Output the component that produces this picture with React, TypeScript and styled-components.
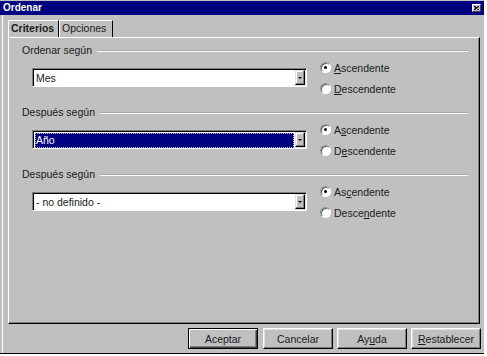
import React from "react";
import styled, { createGlobalStyle } from "styled-components";

const Global = createGlobalStyle`
  html, body { margin: 0; padding: 0; background: #ffffff; }
  body {
    font-family: "Liberation Sans", Arial, sans-serif;
    font-size: 10.5px;
    color: #1a1a1a;
  }
  #root { width: 487px; height: 356px; }
`;

const Window = styled.div`
  box-sizing: border-box;
  width: 484px;
  height: 354px;
  background: #c0c0c0;
  border-bottom: 1px solid #000;
  display: flex;
  flex-direction: column;
`;

const TitleBar = styled.div`
  height: 14px;
  margin-top: 1px;
  background: #000080;
  color: #fff;
  font-weight: bold;
  font-size: 10px;
  line-height: 14px;
  padding-left: 3px;
  display: flex;
  align-items: center;
  justify-content: space-between;
  padding-right: 3px;
`;

const CloseBox = styled.div`
  box-sizing: border-box;
  width: 9px;
  height: 8px;
  background: #c0c0c0;
  border: 1px solid;
  border-color: #fff #404040 #404040 #fff;
  display: flex;
  align-items: center;
  justify-content: center;
`;

const Body = styled.div`
  flex: 1;
  margin-left: 2px;
  border-left: 1px solid #fff;
  padding: 5px 3px 0 5px;
  display: flex;
  flex-direction: column;
`;

const TabStrip = styled.div`
  display: flex;
  height: 17px;
`;

const Tab = styled.div<{ $active?: boolean; $width: number }>`
  box-sizing: border-box;
  width: ${(p) => p.$width}px;
  height: 17px;
  border-left: 1px solid #fff;
  border-top: 1px solid #fff;
  border-right: 1px solid #000;
  padding-left: 2px;
  font-weight: ${(p) => (p.$active ? "bold" : "normal")};
  line-height: 15px;
  white-space: nowrap;
`;

const Panel = styled.div`
  box-sizing: border-box;
  width: 472px;
  height: 287px;
  border-top: 1px solid #fff;
  border-left: 1px solid #fff;
  border-right: 1px solid #000;
  border-bottom: 1px solid #000;
  box-shadow: inset -1px -1px 0 #808080;
  padding: 6px 11px 0 13px;
  display: flex;
  flex-direction: column;
  gap: 7px;
`;

const Group = styled.div`
  display: flex;
  flex-direction: column;
`;

const GroupHeader = styled.div`
  display: flex;
  align-items: center;
  height: 13px;
  line-height: 13px;
`;

const GroupLine = styled.div`
  flex: 1;
  margin-left: 5px;
  height: 0;
  border-top: 1px solid #a8a8a8;
  border-bottom: 1px solid #fff;
`;

const GroupBody = styled.div`
  display: flex;
  align-items: flex-start;
`;

const Combo = styled.div`
  box-sizing: border-box;
  margin: 11px 0 0 10px;
  width: 275px;
  height: 19px;
  border: 1px solid;
  border-color: #808080 #fff #fff #808080;
  box-shadow: inset 1px 1px 0 #000, inset -1px -1px 0 #dfdfdf;
  background: #fff;
  display: flex;
  padding: 1px;
`;

const ComboField = styled.div<{ $selected?: boolean }>`
  flex: 1;
  margin: 1px 1px 0 1px;
  padding-left: 1px;
  line-height: 15px;
  height: 15px;
  background: ${(p) => (p.$selected ? "#000080" : "#fff")};
  color: ${(p) => (p.$selected ? "#fff" : "#1a1a1a")};
  outline: ${(p) => (p.$selected ? "1px dotted #c0c0c0" : "none")};
  outline-offset: -1px;
`;

const DropButton = styled.div`
  box-sizing: border-box;
  width: 10px;
  height: 15px;
  background: #c0c0c0;
  border: 1px solid;
  border-color: #dfdfdf #000 #000 #dfdfdf;
  box-shadow: inset -1px -1px 0 #808080, inset 1px 1px 0 #fff;
  display: flex;
  align-items: center;
  justify-content: center;
`;

const Arrow = styled.div`
  width: 0;
  height: 0;
  border-left: 2px solid transparent;
  border-right: 2px solid transparent;
  border-top: 2px solid #000;
`;

const RadioCol = styled.div`
  margin-left: 13px;
  display: flex;
  flex-direction: column;
`;

const RadioRow = styled.label`
  display: flex;
  align-items: center;
  height: 21px;
  white-space: nowrap;
`;

const RadioCircle = styled.span<{ $checked?: boolean }>`
  box-sizing: border-box;
  width: 11px;
  height: 11px;
  border-radius: 50%;
  border: 1px solid;
  border-color: #909090 #fff #fff #909090;
  box-shadow: inset 1px 1px 0 #606060;
  background: #fff;
  margin-right: 3px;
  display: flex;
  align-items: center;
  justify-content: center;
  &::after {
    content: "";
    display: ${(p) => (p.$checked ? "block" : "none")};
    width: 3px;
    height: 3px;
    border-radius: 50%;
    background: #000;
  }
`;

const ButtonRow = styled.div`
  display: flex;
  justify-content: flex-end;
  gap: 4px;
  margin-top: 4px;
`;

const Button = styled.button<{ $default?: boolean }>`
  box-sizing: border-box;
  width: 70px;
  height: 21px;
  padding: 0;
  margin-right: ${(p) => (p.$default ? "1px" : "0")};
  font-family: "Liberation Sans", Arial, sans-serif;
  font-size: 10.5px;
  color: #1a1a1a;
  background: #c0c0c0;
  border: 1px solid;
  border-color: ${(p) => (p.$default ? "#000" : "#fff #000 #000 #fff")};
  box-shadow: ${(p) =>
    p.$default
      ? "inset 1px 1px 0 #fff, inset -1px -1px 0 #404040, inset -2px -2px 0 #808080"
      : "inset -1px -1px 0 #808080, inset 1px 1px 0 #dfdfdf"};
`;

type GroupData = {
  label: string;
  value: string;
  selected?: boolean;
  asc: React.ReactNode;
  desc: React.ReactNode;
};

const groups: GroupData[] = [
  {
    label: "Ordenar según",
    value: "Mes",
    asc: (
      <>
        <u>A</u>scendente
      </>
    ),
    desc: (
      <>
        <u>D</u>escendente
      </>
    ),
  },
  {
    label: "Después según",
    value: "Año",
    selected: true,
    asc: (
      <>
        A<u>s</u>cendente
      </>
    ),
    desc: (
      <>
        D<u>e</u>scendente
      </>
    ),
  },
  {
    label: "Después según",
    value: "- no definido -",
    asc: (
      <>
        As<u>c</u>endente
      </>
    ),
    desc: (
      <>
        Desce<u>n</u>dente
      </>
    ),
  },
];

export default function App() {
  return (
    <>
      <Global />
      <Window>
        <TitleBar>
          <span>Ordenar</span>
          <CloseBox>
            <svg width="5" height="4" viewBox="0 0 5 4">
              <path d="M0 0L5 4M5 0L0 4" stroke="#000" strokeWidth="1.2" />
            </svg>
          </CloseBox>
        </TitleBar>
        <Body>
          <TabStrip>
            <Tab $active $width={51}>
              Criterios
            </Tab>
            <Tab $width={54}>Opciones</Tab>
          </TabStrip>
          <Panel>
            {groups.map((g, i) => (
              <Group key={i}>
                <GroupHeader>
                  <span>{g.label}</span>
                  <GroupLine />
                </GroupHeader>
                <GroupBody>
                  <Combo>
                    <ComboField $selected={g.selected}>{g.value}</ComboField>
                    <DropButton>
                      <Arrow />
                    </DropButton>
                  </Combo>
                  <RadioCol>
                    <RadioRow>
                      <RadioCircle $checked />
                      <span>{g.asc}</span>
                    </RadioRow>
                    <RadioRow>
                      <RadioCircle />
                      <span>{g.desc}</span>
                    </RadioRow>
                  </RadioCol>
                </GroupBody>
              </Group>
            ))}
          </Panel>
          <ButtonRow>
            <Button $default>Aceptar</Button>
            <Button>Cancelar</Button>
            <Button>
              Ay<u>u</u>da
            </Button>
            <Button>
              <u>R</u>establecer
            </Button>
          </ButtonRow>
        </Body>
      </Window>
    </>
  );
}
